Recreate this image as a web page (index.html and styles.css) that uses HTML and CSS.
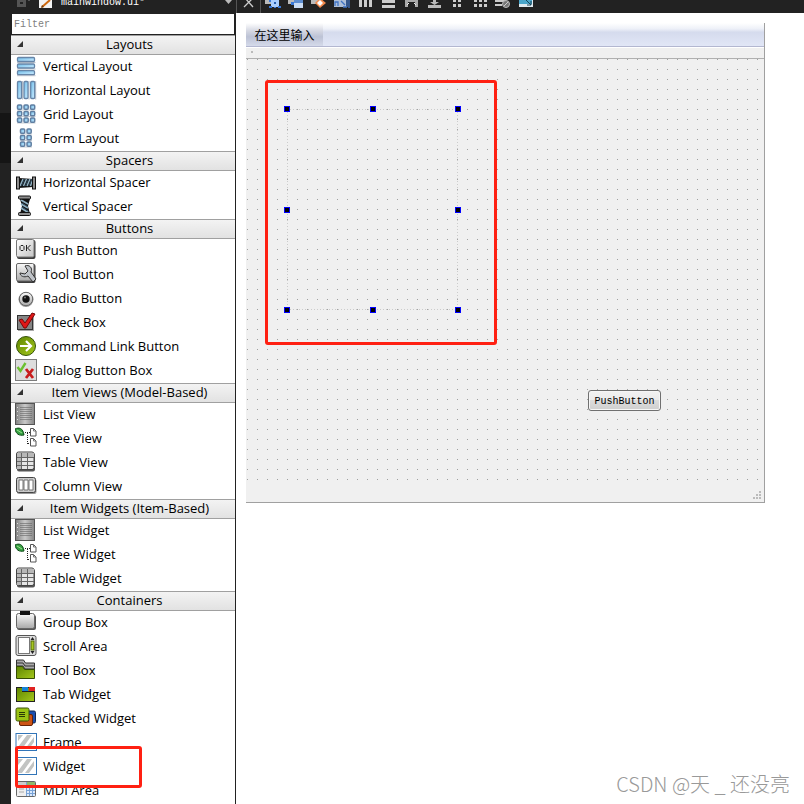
FILE: index.html
```html
<!DOCTYPE html>
<html lang="en">
<head>
<meta charset="utf-8">
<title>mainwindow.ui</title>
<link rel="stylesheet" href="styles.css">
</head>
<body>
<svg class="sprite" aria-hidden="true">
  <defs>
    <linearGradient id="blue" x1="0" y1="0" x2="1" y2="1"><stop offset="0" stop-color="#6fbdea"/><stop offset="1" stop-color="#cdecff"/></linearGradient>
    <linearGradient id="grey" x1="0" y1="0" x2="0" y2="1"><stop offset="0" stop-color="#fafafa"/><stop offset="1" stop-color="#a9a9a9"/></linearGradient>
    <linearGradient id="face" x1="0" y1="0" x2="1" y2="1"><stop offset="0" stop-color="#fff"/><stop offset="1" stop-color="#c4c4c4"/></linearGradient>
    <linearGradient id="list" x1="0" y1="0" x2="1" y2="0"><stop offset="0" stop-color="#808080"/><stop offset=".5" stop-color="#c9c9c9"/><stop offset="1" stop-color="#848484"/></linearGradient>
    <linearGradient id="green" x1="0" y1="0" x2="1" y2="1"><stop offset="0" stop-color="#5e8500"/><stop offset="1" stop-color="#a5c81c"/></linearGradient>
    <symbol id="i-vertical" viewBox="0 0 22 22"><path d="M2 7.500h18.500M2 14h18.500M2 20.700h18.500" stroke="#8d97a6" stroke-opacity=".6"/><g fill="url(#blue)" stroke="#6685a8" stroke-width="1.300"><rect x="2.500" y="2.500" width="17" height="4" rx="1"/><rect x="2.500" y="9" width="17" height="4" rx="1"/><rect x="2.500" y="15.700" width="17" height="4" rx="1"/></g></symbol>
    <symbol id="i-horizontal" viewBox="0 0 22 22"><path d="M7.500 2v18.500M14 2v18.500M20.700 2v18.500" stroke="#8d97a6" stroke-opacity=".6"/><g fill="url(#blue)" stroke="#6685a8" stroke-width="1.300"><rect x="2.500" y="2.500" width="4" height="17" rx="1"/><rect x="9" y="2.500" width="4" height="17" rx="1"/><rect x="15.700" y="2.500" width="4" height="17" rx="1"/></g></symbol>
    <symbol id="i-grid" viewBox="0 0 22 22"><path d="M2 7h18.500M2 13.500h18.500M2 20h18.500" stroke="#8d97a6" stroke-opacity=".5"/><g fill="url(#blue)" stroke="#5f7ea1" stroke-width="1.500"><rect x="2.500" y="2" width="4.200" height="4.200" rx="1"/><rect x="9" y="2" width="4.200" height="4.200" rx="1"/><rect x="15.500" y="2" width="4.200" height="4.200" rx="1"/><rect x="2.500" y="8.500" width="4.200" height="4.200" rx="1"/><rect x="9" y="8.500" width="4.200" height="4.200" rx="1"/><rect x="15.500" y="8.500" width="4.200" height="4.200" rx="1"/><rect x="2.500" y="15" width="4.200" height="4.200" rx="1"/><rect x="9" y="15" width="4.200" height="4.200" rx="1"/><rect x="15.500" y="15" width="4.200" height="4.200" rx="1"/></g></symbol>
    <symbol id="i-form" viewBox="0 0 22 22"><path d="M5 7h12M5 13.500h12M5 20h12" stroke="#8d97a6" stroke-opacity=".5"/><g fill="url(#blue)" stroke="#5f7ea1" stroke-width="1.500"><rect x="5.500" y="2" width="4.200" height="4.200" rx="1"/><rect x="12" y="2" width="4.200" height="4.200" rx="1"/><rect x="5.500" y="8.500" width="4.200" height="4.200" rx="1"/><rect x="12" y="8.500" width="4.200" height="4.200" rx="1"/><rect x="5.500" y="15" width="4.200" height="4.200" rx="1"/><rect x="12" y="15" width="4.200" height="4.200" rx="1"/></g></symbol>
    <symbol id="i-hspacer" viewBox="0 0 22 22"><path d="M4 7l14 1v8L4 17z" fill="#111"/><path d="M5 15l3-7M8.500 15l3-7M12 15l3-7M15.500 15l2-6" stroke="#8fb0c2" stroke-width="1.500"/><path d="M6.500 15l3-7M10.300 15l3-7M13.800 15l3-7" stroke="#2d4658"/><rect x="1.500" y="6" width="3" height="12" fill="#8d8d8d" stroke="#111"/><rect x="17.500" y="6" width="3" height="12" fill="#8d8d8d" stroke="#111"/></symbol>
    <symbol id="i-vspacer" viewBox="0 0 22 22"><path d="M5 4h10l-2 7 2 8H5l2-8z" fill="#111"/><path d="M6 5l7 4M6 9l7 4M6 13l8 5" stroke="#8fb0c2" stroke-width="1.600"/><path d="M7 8l6 4M7 12l6 4" stroke="#38566b"/><rect x="3.500" y="1" width="12" height="3" rx="1" fill="#8d8d8d" stroke="#111"/><rect x="3.500" y="17.500" width="12" height="3" rx="1" fill="#8d8d8d" stroke="#111"/></symbol>
    <symbol id="i-push" viewBox="0 0 22 22"><rect x="2" y="1" width="18.500" height="19" rx="2" fill="#3c3c3c"/><rect x="1.500" y=".5" width="17.500" height="17.500" rx="1.500" fill="url(#face)" stroke="#777"/><path d="M6 6.500h2l1 1v3l-1 1H6l-1-1v-3zM11.500 6v6M15.500 6l-3 3 3 3" fill="none" stroke="#222"/></symbol>
    <symbol id="i-tool" viewBox="0 0 22 22"><rect x="2" y="1" width="18.500" height="19" rx="2" fill="#3c3c3c"/><rect x="1.500" y=".5" width="17.500" height="17.500" rx="1.500" fill="url(#grey)" stroke="#666"/><path d="M10 3c4-2 8 2 6 6l5 7-3 3-5-6c-4 2-8 0-8-3l5 1 3-3z" fill="#bfc3c8" stroke="#333"/></symbol>
    <symbol id="i-radio" viewBox="0 0 22 22"><circle cx="11" cy="12.500" r="7.500" fill="#555" fill-opacity=".6"/><circle cx="11" cy="12" r="6.700" fill="url(#grey)" stroke="#666"/><circle cx="11" cy="12" r="3.700" fill="#111"/><circle cx="10" cy="10.500" r="1" fill="#777"/></symbol>
    <symbol id="i-check" viewBox="0 0 22 22"><rect x="3" y="5" width="16" height="15" fill="#aaa"/><rect x="2.500" y="4.500" width="15" height="14" fill="#858585" stroke="#333"/><path d="M4 9l3-1 3 4 7-10 3 1-9 14H9z" fill="#df1717" stroke="#760808"/></symbol>
    <symbol id="i-command" viewBox="0 0 22 22"><circle cx="11" cy="11" r="9.500" fill="url(#green)" stroke="#36530a"/><path d="M5 11h10M11 6l5 5-5 5" fill="none" stroke="#fff" stroke-width="2.200"/></symbol>
    <symbol id="i-dialog" viewBox="0 0 22 22"><rect x=".5" y=".5" width="21" height="21" fill="#ddd" stroke="#7c7c7c"/><path d="M2.500 8l3 4 5-8" fill="none" stroke="#6cc030" stroke-width="2.400"/><path d="M11 10l7 9M18 10l-7 9" stroke="#c81c1c" stroke-width="2.800"/></symbol>
    <symbol id="i-list" viewBox="0 0 22 22"><rect x=".5" y=".5" width="19" height="21" fill="url(#list)" stroke="#555"/><path d="M5 4.500h12M5 6.500h12M5 8.500h12M5 10.500h12M5 12.500h12M5 14.500h12M5 16.500h12" stroke="#666" stroke-opacity=".6"/><path d="M2 4.500h1M2 8.500h1M2 12.500h1M2 16.500h1" stroke="#ddd"/></symbol>
    <symbol id="i-tree" viewBox="0 0 22 22"><path d="M0 2c4-2 8-1 9 6-5 1-8-1-9-6z" fill="#35a042" stroke="#0e4a17"/><path d="M2 3l5 3" stroke="#9be08d"/><path d="M10 5.500h5M12.500 6v11M13 16.500h3" fill="none" stroke="#222" stroke-dasharray="1 1"/><path d="M15.500 1.500h3l2.500 2.500v5h-5.500zM15.500 11.500h3l2.500 2.500v5h-5.500z" fill="#fff" stroke="#555"/><path d="M18.500 1.500V4H21M18.500 11.500V14H21" fill="none" stroke="#777"/></symbol>
    <symbol id="i-table" viewBox="0 0 22 22"><rect x="2" y="2" width="18" height="18.500" rx="2" fill="#555"/><rect x="1.500" y="1" width="17.500" height="17.500" rx="2" fill="#e6e6e6" stroke="#444"/><path d="M2 2h17v4H2zM2 2h4v16H2z" fill="#b8b8b8"/><path d="M2 6.500h17M6.500 2v16M2 10.500h17M2 14.500h17M12.500 2v16" stroke="#666"/></symbol>
    <symbol id="i-column" viewBox="0 0 22 22"><rect x="2" y="4" width="19.500" height="15" rx="2" fill="#999"/><rect x="1.500" y="2.500" width="19" height="15" rx="2" fill="#c9c9c9" stroke="#444"/><path d="M4 5h4v10H4zM9 5h4v10H9zM14 5h4v10h-4z" fill="#fff" stroke="#777"/></symbol>
    <symbol id="i-group" viewBox="0 0 22 22"><rect x="2" y="4" width="19" height="15" rx="2" fill="#555"/><rect x="1.500" y="2.500" width="18" height="15" rx="2" fill="url(#grey)" stroke="#666"/><path d="M5 0h10v4H5z" fill="#111"/></symbol>
    <symbol id="i-scroll" viewBox="0 0 22 22"><rect x="1" y=".5" width="20" height="20" rx="2" fill="#ddd" stroke="#555"/><rect x="3.500" y="2.500" width="11" height="16" fill="#fff" stroke="#777"/><path d="M15.500 5L17.500 2l2 3zM15.500 16l2 3 2-3z" fill="#222"/><rect x="16" y="6" width="3" height="9" fill="#a6c720" stroke="#52690a"/></symbol>
    <symbol id="i-toolbox" viewBox="0 0 22 22"><path d="M1.500 1h7l2 3h9v14h-18z" fill="#aaa" stroke="#333"/><path d="M2 4h6l2 3h9M2 7h6l2 3h9" stroke="#333" fill="none"/><path d="M1.500 7.500h6l2 3h10v9h-18z" fill="url(#green)" stroke="#354c05"/></symbol>
    <symbol id="i-tab" viewBox="0 0 22 22"><rect x="1.500" y="4.500" width="18" height="14" fill="url(#green)" stroke="#222"/><path d="M7 4h6v4H7z" fill="#1683d8"/><path d="M14 4h6v4h-6z" fill="#e02222"/><path d="M7 8.500h13" stroke="#222"/></symbol>
    <symbol id="i-stack" viewBox="0 0 22 22"><rect x="8" y="4" width="12.500" height="12" rx="1.500" fill="#1b4eae" stroke="#102752"/><rect x="4.500" y="7.500" width="13" height="11" rx="1.500" fill="#cc5314" stroke="#682306"/><rect x="1" y="1" width="13" height="13" rx="1.500" fill="#9ac314" stroke="#3a5308"/><path d="M4 5.500h6M4 7.500h6M4 9.500h6" stroke="#293a06"/></symbol>
    <symbol id="i-frame" viewBox="0 0 22 22"><rect x="1" y="2.500" width="20.500" height="17" fill="#fff" stroke="#3275b8"/><path d="M3 4h5l-5 6zM12 4h5L7 18H3v-2zM19 6v5l-5 7h-4z" fill="#c2c4c3"/></symbol>
    <symbol id="i-mdi" viewBox="0 0 22 22"><rect x="1.500" y="2.500" width="19" height="15" rx="1" fill="#eee" stroke="#666"/><path d="M2 3h9v4H2z" fill="#ccc"/><path d="M11 3h9v6h-9z" fill="#8eb86b"/><path d="M4 10h5M4 13h5" stroke="#aaa"/><path d="M11 9h9v8h-9z" fill="#dbe9fb"/><path d="M12 11.500h8M12 14.500h8M14.500 9v8M17.500 9v8M11.500 3v14" stroke="#78a2d6"/></symbol>
  </defs>
</svg>
<div class="app">
  <header class="topbar">
    <div class="document">
      <svg class="lock" viewBox="0 0 14 13"><path d="M0 0h9v7H0z" fill="#555"/><path d="M3 2h3v2H3z" fill="#222"/><path d="M11 0h2v1h-2z" fill="#555"/></svg>
      <svg class="page" viewBox="0 0 14 13"><path d="M0 0h13v8H0z" fill="#f3f3f3"/><path d="M3 7l8-7" stroke="#cf6a10" stroke-width="2"/><path d="M2 8l1-3 2 2z" fill="#743b08"/></svg>
      <span class="filename">mainwindow.ui*</span>
      <svg class="arrow" viewBox="0 0 9 13"><path d="M1 0h7L4.500 4z" fill="#bbb"/></svg>
    </div>
    <nav class="tools" aria-label="Form tools">
      <button class="close" aria-label="Close"><svg viewBox="0 0 18 13"><path d="M4 7l9-9M5-2l8 9" fill="none" stroke="#ccc" stroke-width="1.300"/></svg></button>
      <button aria-label="Edit widgets"><svg viewBox="0 0 18 13"><path d="M1 0h7v4H1z" fill="#bbb"/><path d="M7 0h8v7H7z" fill="#a9ceff"/><path d="M5 0h2v2H5zM5 6h3v2H5zM14 6h3v2h-3zM10 7h2v1h-2z" fill="#3979d8"/><path d="M10 2h2v2h-2z" fill="#245dae"/></svg></button>
      <button aria-label="Edit signals"><svg viewBox="0 0 18 13"><path d="M1 0h8v4H1z" fill="#bbb"/><path d="M4 2h4v3H4z" fill="#3979d8"/><path d="M7 1h9v7H7z" fill="#c9dcf5"/><path d="M7 0h9v3H7z" fill="#5d8dd0"/></svg></button>
      <button aria-label="Edit buddies"><svg viewBox="0 0 18 13"><path d="M1 0h8v4H1z" fill="#bbb"/><path d="M10-2l6 5-6 5-5-5z" fill="#f2894b"/><path d="M10 0l3 3-3 3-3-3z" fill="#fff"/></svg></button>
      <button aria-label="Edit tab order"><svg viewBox="0 0 18 13"><path d="M1 0h12v7H1z" fill="#aebfd8"/><path d="M2 6V2h3v4M8 1l4 4M14 0v7M10 7h4M16 0v8" fill="none" stroke="#3f73c4" stroke-width="1.300"/></svg></button>
      <button aria-label="Lay out horizontally"><svg viewBox="0 0 18 13"><path d="M3 0h3v7H3zM8 0h3v7H8zM13 0h3v7h-3z" fill="#ccc"/></svg></button>
      <button aria-label="Lay out vertically"><svg viewBox="0 0 18 13"><path d="M3 0h13v3H3zM3 5h13v3H3z" fill="#ccc"/></svg></button>
      <button aria-label="Horizontal splitter"><svg viewBox="0 0 18 13"><path d="M3 0h3v7H3zM13 0h3v7h-3zM6 0h7v2H6z" fill="#aaa"/><path d="M7 3l-2 2M12 3l2 2" stroke="#eee"/></svg></button>
      <button aria-label="Vertical splitter"><svg viewBox="0 0 18 13"><path d="M8 0h3v3H8zM5 2h9L9.500 5zM3 5h13v3H3z" fill="#bbb"/></svg></button>
      <button aria-label="Form layout"><svg viewBox="0 0 18 13"><path d="M5 0h3v2H5zM10 0h3v2h-3zM5 4h3v3H5zM10 4h3v3h-3z" fill="#ccc"/></svg></button>
      <button aria-label="Grid layout"><svg viewBox="0 0 18 13"><path d="M3 0h3v2H3zM8 0h3v2H8zM13 0h3v2h-3zM3 4h3v3H3zM8 4h3v3H8zM13 4h3v3h-3z" fill="#ccc"/></svg></button>
      <button aria-label="Break layout"><svg viewBox="0 0 18 13"><path d="M1 0h11v2H1zM1 4h7v2H1z" fill="#ccc"/><circle cx="12" cy="4" r="3.500" fill="#777" stroke="#bbb"/><path d="M10 6l4-4" stroke="#ccc"/></svg></button>
      <button aria-label="Adjust size"><svg viewBox="0 0 18 13"><path d="M2 0h14v7H2z" fill="#dfe9ef"/><path d="M2 0h13v4H2z" fill="#4aa6cb"/><path d="M9 0l5 5M14 1v4h-4" stroke="#164459" fill="none"/></svg></button>
    </nav>
  </header>
  <main class="workspace">
    <div class="rail"><div class="rail-mark"></div></div>
    <aside class="widget-box">
      <input class="filter" type="text" placeholder="Filter" aria-label="Filter">
      <button class="group">Layouts</button>
      <ul>
        <li><svg><use href="#i-vertical"/></svg>Vertical Layout</li>
        <li><svg><use href="#i-horizontal"/></svg>Horizontal Layout</li>
        <li><svg><use href="#i-grid"/></svg>Grid Layout</li>
        <li><svg><use href="#i-form"/></svg>Form Layout</li>
      </ul>
      <button class="group">Spacers</button>
      <ul>
        <li><svg><use href="#i-hspacer"/></svg>Horizontal Spacer</li>
        <li><svg><use href="#i-vspacer"/></svg>Vertical Spacer</li>
      </ul>
      <button class="group">Buttons</button>
      <ul>
        <li><svg><use href="#i-push"/></svg>Push Button</li>
        <li><svg><use href="#i-tool"/></svg>Tool Button</li>
        <li><svg><use href="#i-radio"/></svg>Radio Button</li>
        <li><svg><use href="#i-check"/></svg>Check Box</li>
        <li><svg><use href="#i-command"/></svg>Command Link Button</li>
        <li><svg><use href="#i-dialog"/></svg>Dialog Button Box</li>
      </ul>
      <button class="group">Item Views (Model-Based)</button>
      <ul>
        <li><svg><use href="#i-list"/></svg>List View</li>
        <li><svg><use href="#i-tree"/></svg>Tree View</li>
        <li><svg><use href="#i-table"/></svg>Table View</li>
        <li><svg><use href="#i-column"/></svg>Column View</li>
      </ul>
      <button class="group">Item Widgets (Item-Based)</button>
      <ul>
        <li><svg><use href="#i-list"/></svg>List Widget</li>
        <li><svg><use href="#i-tree"/></svg>Tree Widget</li>
        <li><svg><use href="#i-table"/></svg>Table Widget</li>
      </ul>
      <button class="group">Containers</button>
      <ul>
        <li><svg><use href="#i-group"/></svg>Group Box</li>
        <li><svg><use href="#i-scroll"/></svg>Scroll Area</li>
        <li><svg><use href="#i-toolbox"/></svg>Tool Box</li>
        <li><svg><use href="#i-tab"/></svg>Tab Widget</li>
        <li><svg><use href="#i-stack"/></svg>Stacked Widget</li>
        <li><svg><use href="#i-frame"/></svg>Frame</li>
        <li class="marked"><svg><use href="#i-frame"/></svg>Widget<span class="mark"></span></li>
        <li><svg><use href="#i-mdi"/></svg>MDI Area</li>
      </ul>
    </aside>
    <section class="editor">
      <div class="form">
        <div class="menubar"><button>在这里输入</button></div>
        <div class="toolbar"></div>
        <div class="canvas">
          <div class="highlight"></div>
          <div class="selection">
            <i></i><i></i><i></i><i></i><i></i><i></i><i></i><i></i>
          </div>
          <button class="push">PushButton</button>
        </div>
        <div class="statusbar"><svg viewBox="0 0 9 9"><path d="M6 0h2v2H6zM6 3h2v2H6zM3 3h2v2H3zM6 6h2v2H6zM3 6h2v2H3zM0 6h2v2H0z" fill="#bbb"/></svg></div>
      </div>
      <p class="credit">CSDN @天 _ 还没亮</p>
    </section>
  </main>
</div>
</body>
</html>
```
FILE: styles.css
```css
* { box-sizing: border-box; }
body {
  margin: 0;
  background: #fff;
  color: #000;
  font: 13px "Open Sans", "Noto Sans CJK SC", sans-serif;
}
button { margin: 0; padding: 0; border: 0; background: none; font: inherit; color: inherit; }
ul { list-style: none; margin: 0; padding: 0; }
.sprite { position: absolute; width: 0; height: 0; }
.app { display: flex; flex-direction: column; height: 100vh; overflow: hidden; }

.topbar { display: flex; flex: none; height: 13px; overflow: hidden; background: #222; }
.document { display: flex; width: 237px; padding-left: 17px; border-right: 1px solid #555; }
.document svg { flex: none; height: 13px; }
.lock { width: 14px; margin-right: 8px; }
.page { width: 14px; }
.filename {
  flex: 1;
  margin: -4px 0 0 8px;
  color: #fff;
  font: 10px/14px "Liberation Mono", monospace;
}
.arrow { width: 9px; margin-right: 3px; }
.tools { display: flex; }
.tools button { width: 23px; height: 13px; }
.tools svg { display: block; width: 18px; height: 13px; margin: 0 auto; }
.tools .close { width: 24px; border-right: 1px solid #555; }

.workspace {
  display: grid;
  grid-template-columns: 11px 225px 1fr;
  flex: 1;
  min-height: 0;
}
.rail { padding-top: 100px; background: #222; }
.rail-mark { height: 50px; background: #151515; }
.widget-box { border-right: 1px solid #222; }
.filter {
  display: block;
  width: 100%;
  height: 22px;
  padding: 0 2px;
  border: 1px solid #222;
  border-radius: 0;
  background: #fff;
  font: 10px "Liberation Mono", monospace;
}
.filter::placeholder { color: #808080; opacity: 1; }
.group {
  display: block;
  position: relative;
  width: 100%;
  height: 20px;
  padding: 0 0 2px 13px;
  border-top: 1px solid #a0a0a0;
  border-bottom: 1px solid #a0a0a0;
  background: linear-gradient(#f3f3f3, #e2e2e2);
  line-height: 16px;
  text-align: center;
}
.group::before {
  content: "";
  position: absolute;
  left: 6px;
  top: 5px;
  width: 6px;
  height: 6px;
  background: #333;
  clip-path: polygon(100% 0, 100% 100%, 0 100%);
}
.widget-box li { display: flex; gap: 6px; height: 24px; padding-left: 4px; line-height: 22px; white-space: nowrap; }
.widget-box li svg { flex: none; width: 22px; height: 22px; }
.marked { position: relative; }
.mark {
  position: absolute;
  left: 4px;
  top: -9px;
  width: 127px;
  height: 42px;
  border: 3px solid #ff2012;
  border-radius: 3px;
}

.editor { display: flex; flex-direction: column; justify-content: space-between; padding: 10px 14px 6px 10px; }
.form {
  margin-right: 25px;
  border: solid #a0a0a0;
  border-width: 0 1px 1px 0;
  background: #f0f0f0;
}
.menubar {
  height: 24px;
  border-bottom: 1px solid #b3b7d0;
  background: linear-gradient(#fff, #eef1f8 25%, #d5dbed 40%, #e1e6f6);
}
.menubar button {
  display: block;
  width: 77px;
  height: 23px;
  background: linear-gradient(#fff, #d4d7e2 35%, #bcc2d5 60%, #d5daea);
  font: 12px/24px "Noto Sans CJK SC", sans-serif;
  text-align: center;
}
.toolbar { height: 12px; border-top: 1px solid #fff; border-bottom: 1px solid #b0b0b0; }
.toolbar::before { content: ""; display: block; width: 2px; height: 2px; margin: 3px 5px; background: #bbb; }
.canvas {
  position: relative;
  height: 421px;
  background:
    linear-gradient(90deg, transparent 1px, #f0f0f0 1px) 1px 0 / 10px 10px,
    linear-gradient(#a0a0a0 1px, #f0f0f0 1px) 1px 0 / 10px 10px;
}
.highlight {
  position: absolute;
  left: 19px;
  top: 21px;
  width: 232px;
  height: 265px;
  border: 3px solid #ff2012;
  border-radius: 3px;
}
.selection {
  position: absolute;
  left: 38px;
  top: 47px;
  display: grid;
  grid-template-columns: repeat(3, 6px);
  grid-template-rows: repeat(3, 6px);
  justify-content: space-between;
  align-content: space-between;
  width: 177px;
  height: 207px;
}
.selection::before {
  --across: repeating-linear-gradient(90deg, #ccc 0 1px, transparent 1px 3px);
  --down: repeating-linear-gradient(#ccc 0 1px, transparent 1px 3px);
  content: "";
  position: absolute;
  inset: 3px;
  background:
    var(--across) top / 100% 1px no-repeat,
    var(--across) bottom / 100% 1px no-repeat,
    var(--down) left / 1px 100% no-repeat,
    var(--down) right / 1px 100% no-repeat;
}
.selection i { position: relative; border: 1px solid #00f; background: #000; }
.selection i:nth-child(5) { grid-column: 3; }
.push {
  position: absolute;
  left: 342px;
  top: 331px;
  width: 73px;
  height: 21px;
  padding-top: 2px;
  border: 1px solid #707070;
  border-radius: 3px;
  background: linear-gradient(#f2f2f2, #ebebeb 48%, #dcdcdc 50%, #cfcfcf);
  box-shadow: inset 0 0 0 1px #f6f6f6;
  font: 10px "Liberation Mono", monospace;
}
.statusbar { display: flex; justify-content: flex-end; align-items: flex-end; height: 22px; padding: 2px; }
.statusbar svg { width: 9px; height: 9px; }
.credit {
  margin: 0;
  color: #999;
  font: 300 20px/28px "Noto Sans CJK SC", sans-serif;
  text-align: right;
}
```
